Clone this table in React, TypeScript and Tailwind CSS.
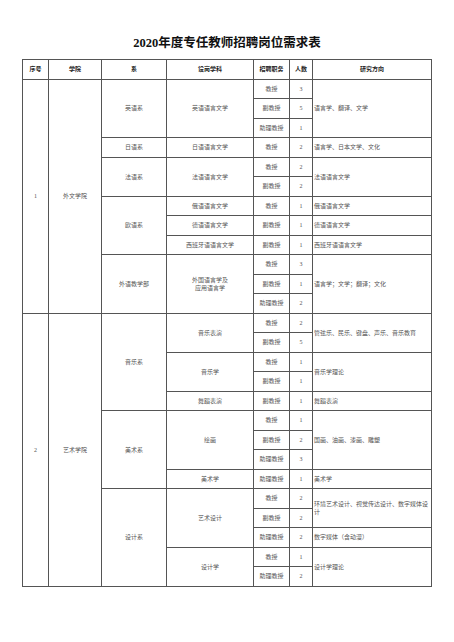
import React from "react";

type Cell = { t: React.ReactNode; rs?: number; left?: boolean };

const r = (t: React.ReactNode, rs?: number, left?: boolean): Cell => ({ t, rs, left });

const rows: Cell[][] = [
  [r("1", 12), r("外文学院", 12), r("英语系", 3), r("英语语言文学", 3), r("教授"), r("3"), r("语言学、翻译、文学", 3, true)],
  [r("副教授"), r("5")],
  [r("助理教授"), r("1")],
  [r("日语系"), r("日语语言文学"), r("教授"), r("2"), r("语言学、日本文学、文化", 1, true)],
  [r("法语系", 2), r("法语语言文学", 2), r("教授"), r("2"), r("法语语言文学", 2, true)],
  [r("副教授"), r("2")],
  [r("欧语系", 3), r("俄语语言文学"), r("教授"), r("1"), r("俄语语言文学", 1, true)],
  [r("德语语言文学"), r("副教授"), r("1"), r("德语语言文学", 1, true)],
  [r("西班牙语语言文学"), r("副教授"), r("1"), r("西班牙语语言文学", 1, true)],
  [
    r("外语教学部", 3),
    r(
      <>
        外国语言学及
        <br />
        应用语言学
      </>,
      3
    ),
    r("教授"),
    r("3"),
    r("语言学；文学；翻译；文化", 3, true),
  ],
  [r("副教授"), r("1")],
  [r("助理教授"), r("2")],
  [r("2", 14), r("艺术学院", 14), r("音乐系", 5), r("音乐表演", 2), r("教授"), r("2"), r("管弦乐、民乐、键盘、声乐、音乐教育", 2, true)],
  [r("副教授"), r("5")],
  [r("音乐学", 2), r("教授"), r("1"), r("音乐学理论", 2, true)],
  [r("副教授"), r("1")],
  [r("舞蹈表演"), r("副教授"), r("1"), r("舞蹈表演", 1, true)],
  [r("美术系", 4), r("绘画", 3), r("教授"), r("1"), r("国画、油画、漆画、雕塑", 3, true)],
  [r("副教授"), r("2")],
  [r("助理教授"), r("3")],
  [r("美术学"), r("助理教授"), r("1"), r("美术学", 1, true)],
  [r("设计系", 5), r("艺术设计", 3), r("教授"), r("2"), r("环境艺术设计、视觉传达设计、数字媒体设计", 2, true)],
  [r("副教授"), r("2")],
  [r("助理教授"), r("2"), r("数字媒体（含动漫）", 1, true)],
  [r("设计学", 2), r("教授"), r("1"), r("设计学理论", 2, true)],
  [r("助理教授"), r("2")],
];

const heads = ["序号", "学院", "系", "设岗学科", "招聘职务", "人数", "研究方向"];
const widths = ["w-[26px]", "w-[53px]", "w-[65px]", "w-[87px]", "w-[36px]", "w-[23px]", "w-[119px]"];

export default function App() {
  return (
    <div
      className="w-[454px] h-[642px] bg-white text-[#555]"
      style={{ fontFamily: '"Liberation Serif", "Noto Sans CJK SC", serif' }}
    >
      <h1 className="pt-[34px] h-[52px] text-center text-[12.5px] leading-[18px] font-bold text-[#111]">
        2020年度专任教师招聘岗位需求表
      </h1>
      <table className="ml-[22px] mt-[7px] w-[409px] table-fixed border-collapse border border-[#555] text-[6px] leading-[8px]">
        <colgroup>
          {widths.map((w, i) => (
            <col key={i} className={w} />
          ))}
        </colgroup>
        <thead>
          <tr className="h-[19.5px]">
            {heads.map((h) => (
              <th key={h} className="border border-[#555] p-0 text-center font-bold text-[#222]">
                {h}
              </th>
            ))}
          </tr>
        </thead>
        <tbody>
          {rows.map((row, i) => (
            <tr key={i} className="h-[19.5px]">
              {row.map((c, j) => (
                <td
                  key={j}
                  rowSpan={c.rs}
                  className={
                    c.left
                      ? "border border-[#555] px-[1px] py-0 text-left align-middle"
                      : "border border-[#555] p-0 text-center align-middle"
                  }
                >
                  {c.t}
                </td>
              ))}
            </tr>
          ))}
        </tbody>
      </table>
    </div>
  );
}
